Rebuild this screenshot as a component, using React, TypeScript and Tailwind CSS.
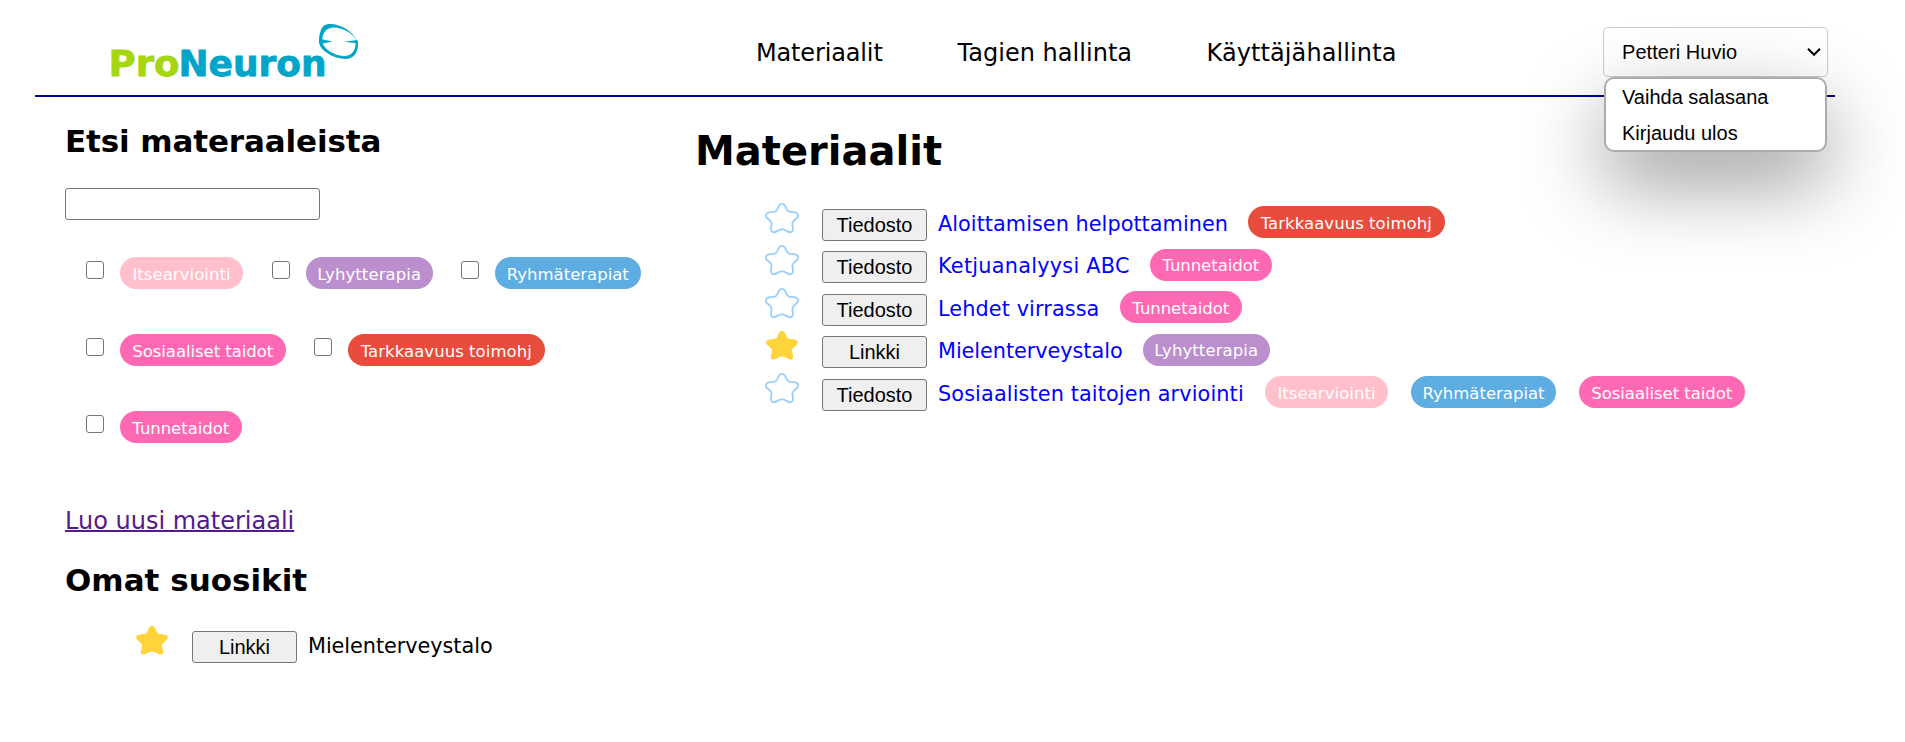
import React from "react";

type Tag = { label: string; color: string; width: string; text: string };

const tags: Record<string, Tag> = {
  itse: { label: "Itsearviointi", color: "bg-[#ffc0cb]", width: "w-[123px]", text: "tracking-[0.05px]" },
  lyhyt: { label: "Lyhytterapia", color: "bg-[#bb8fce]", width: "w-[126.5px]", text: "tracking-[0.1px]" },
  ryhma: { label: "Ryhmäterapiat", color: "bg-[#5dade2]", width: "w-[145.5px]", text: "tracking-[0px]" },
  sos: { label: "Sosiaaliset taidot", color: "bg-[#ff69b4]", width: "w-[165.5px]", text: "tracking-[-0.05px]" },
  tark: { label: "Tarkkaavuus toimohj", color: "bg-[#e74c3c]", width: "w-[196.5px]", text: "tracking-[0.05px]" },
  tunne: { label: "Tunnetaidot", color: "bg-[#ff69b4]", width: "w-[121.5px]", text: "tracking-[-0.05px]" },
};

function TagPill({ tag }: { tag: Tag }) {
  return (
    <span className={`flex h-8 shrink-0 items-center justify-center rounded-full pt-[4px] text-[16.5px] leading-none whitespace-nowrap text-white ${tag.color} ${tag.width}`}>
      <span className={tag.text}>{tag.label}</span>
    </span>
  );
}

const STAR_FILLED =
  "M17 1.8C18.6 1.8 19.7 3 20.6 5L22 8.2C22.4 9.2 23 9.6 24.2 9.8L29 10.4C33.2 11 34 13.7 31.3 16.3L27.9 19.6C27 20.4 26.9 21 27.1 22.1L28 26.7C28.7 30.2 27 31.4 23.8 30L19.2 27.9C17.6 27.2 16.4 27.2 14.8 27.9L10.2 30C7 31.4 5.3 30.2 6 26.7L6.9 22.1C7.1 21 7 20.4 6.1 19.6L2.7 16.3C0 13.7.8 11 5 10.4L9.8 9.8C11 9.6 11.6 9.2 12 8.2L13.4 5C14.3 3 15.4 1.8 17 1.8Z";
const STAR_OUTLINE =
  "M17 1.9C19 1.9 20 3.2 20.8 5.2C21.8 8 22.6 9.9 25.5 9.9C28 9.9 30 10 31.5 10.8C33.6 12 33.6 14.4 32 16C30.4 17.6 27.6 19 27.4 21.5C27.3 23.5 28.2 25.3 28 27.5C27.8 29.8 26 30.6 24 30C21.5 29.3 19.5 27.2 17 27.2C14.5 27.2 12.5 29.3 10 30C8 30.6 6.2 29.8 6 27.5C5.8 25.3 6.7 23.5 6.6 21.5C6.4 19 3.6 17.6 2 16C.4 14.4 .4 12 2.5 10.8C4 10 6 9.9 8.5 9.9C11.4 9.9 12.2 8 13.2 5.2C14 3.2 15 1.9 17 1.9Z";

function Star({ filled }: { filled?: boolean }) {
  return (
    <svg className="h-8 w-[34px] shrink-0" viewBox="0 0 34 32">
      {filled ? (
        <path d={STAR_FILLED} fill="#ffd43b" />
      ) : (
        <path d={STAR_OUTLINE} fill="#ffffff" stroke="#9dd1fb" strokeWidth={1.9} />
      )}
    </svg>
  );
}

function TypeButton({ children, place }: { children: React.ReactNode; place: string }) {
  return (
    <button className={`block h-8 w-[105px] shrink-0 rounded-[3px] border border-[#767676] bg-[#efefef] font-['Liberation_Sans',sans-serif] text-[20px] leading-none text-black ${place}`}>
      {children}
    </button>
  );
}

function Filter({ tag, gap }: { tag: Tag; gap?: string }) {
  return (
    <label className={`flex ${gap ?? ""}`}>
      <span className="mt-1 mr-4 h-[18px] w-[18px] shrink-0 rounded-[3px] border-[1.5px] border-[#767676] bg-white" />
      <TagPill tag={tag} />
    </label>
  );
}

const materials = [
  { type: "Tiedosto", title: "Aloittamisen helpottaminen", w: "w-[310px]", t: "tracking-[0.04px]", tags: [tags.tark] },
  { type: "Tiedosto", title: "Ketjuanalyysi ABC", w: "w-[212px]", t: "tracking-[0.25px]", tags: [tags.tunne] },
  { type: "Tiedosto", title: "Lehdet virrassa", w: "w-[182px]", t: "tracking-[0.1px]", tags: [tags.tunne] },
  { type: "Linkki", title: "Mielenterveystalo", w: "w-[205px]", t: "tracking-[-0.05px]", tags: [tags.lyhyt], fav: true },
  { type: "Tiedosto", title: "Sosiaalisten taitojen arviointi", w: "w-[327px]", t: "tracking-[0.12px]", tags: [tags.itse, tags.ryhma, tags.sos] },
];

function Logo() {
  return (
    <svg className="h-[66px] w-[260px]" viewBox="105 18 260 66" fontFamily="'DejaVu Sans', sans-serif" fontWeight="700">
      <text x="108.5" y="75.5" fontSize="36" fill="#a5d610" stroke="#a5d610" strokeWidth="0.8" textLength="71" lengthAdjust="spacingAndGlyphs">Pro</text>
      <text x="178.5" y="75.5" fontSize="36" fill="#00a5c8" stroke="#00a5c8" strokeWidth="0.8" textLength="148" lengthAdjust="spacingAndGlyphs">Neuron</text>
      <path
        fill="#00a5c8"
        fillRule="evenodd"
        d="M319 41.5C319 37 319.5 33 321 30C322.5 25.5 326 24 330 24C341 24 352 31 358 41.5C358.5 50 356 59 345.5 58.9C334 58.8 320 51 318.9 42ZM322.3 39.3C322.8 33 326 28.2 333 27.6C341 27.2 352 32.5 356.6 40C353 40.8 348 41.2 344.3 41.6C348 42.4 352 42.8 355.5 43C355.5 49 353 55.6 345 56C335 56 324.5 49 322.8 43.4C326 42.8 330 42.3 332.5 41.5C330 40.8 326 40.5 322.3 39.3Z"
      />
    </svg>
  );
}

export default function App() {
  return (
    <div className="flex h-[742px] w-[1905px] flex-col overflow-hidden bg-white font-['DejaVu_Sans',sans-serif] text-black">
      <header className="ml-[35px] flex h-[97px] w-[1800px] shrink-0 border-b-2 border-[#00008b]">
        <div className="w-[721px] shrink-0 pt-[18px] pl-[70px]"><Logo /></div>
        <nav className="flex w-[847px] shrink-0 pt-[38px] text-[24px] leading-[30px] whitespace-nowrap">
          <a className="w-[201.5px]"><span className="tracking-[-0.15px]">Materiaalit</span></a>
          <a className="w-[249px]"><span className="tracking-[0.03px]">Tagien hallinta</span></a>
          <a><span className="tracking-[0.1px]">Käyttäjähallinta</span></a>
        </nav>
        <div className="relative mt-[27px] h-[50px] w-[225px] shrink-0 font-['Liberation_Sans',sans-serif] text-[20px]">
          <div className="absolute top-[50px] left-px z-10 flex h-[75px] w-[223px] flex-col rounded-[10px] border-2 border-[#acacac] bg-white pl-4 shadow-[0_31px_80px_rgba(0,0,0,0.4)]">
            <span className="h-9 leading-9">Vaihda salasana</span>
            <span className="h-9 leading-[37px]">Kirjaudu ulos</span>
          </div>
          <div className="flex h-[50px] items-center justify-between rounded-[5px] border border-[#ccc] pr-[6px] pl-[18px]">
            <span className="tracking-[0.05px]">Petteri Huvio</span>
            <svg className="h-[10px] w-[14px]" viewBox="0 0 14 10"><path d="M1 1.8L7 7.8L13 1.8" fill="none" stroke="#000" strokeWidth="2" /></svg>
          </div>
        </div>
      </header>

      <main className="flex">
        <section className="w-[695px] shrink-0 pl-[65px]">
          <h2 className="mt-[24px] h-10 text-[31px] leading-10 font-bold whitespace-nowrap"><span className="tracking-[-0.12px]">Etsi materaaleista</span></h2>
          <input className="mt-[27px] block h-8 w-[255px] rounded-[3px] border border-[#767676]" />
          <div className="mt-[37px] ml-[21px] flex flex-col gap-[45px]">
            <div className="flex"><Filter tag={tags.itse} /><Filter tag={tags.lyhyt} gap="ml-[29px]" /><Filter tag={tags.ryhma} gap="ml-[28.5px]" /></div>
            <div className="flex"><Filter tag={tags.sos} /><Filter tag={tags.tark} gap="ml-[28.5px]" /></div>
            <div className="flex"><Filter tag={tags.tunne} /></div>
          </div>
          <a className="mt-[63px] block h-[30px] w-fit text-[24px] leading-[30px] whitespace-nowrap text-[#551a8b] underline decoration-2"><span className="tracking-[0px]">Luo uusi materiaali</span></a>
          <h2 className="mt-[24px] h-10 text-[31px] leading-10 font-bold whitespace-nowrap"><span className="tracking-[0px]">Omat suosikit</span></h2>
          <div className="mt-[24px] ml-[70px] flex">
            <Star filled />
            <TypeButton place="mt-[7px] ml-[23px]">Linkki</TypeButton>
            <span className="mt-[7px] ml-[11px] text-[20.8px] leading-[30px] tracking-[-0.05px]">Mielenterveystalo</span>
          </div>
        </section>

        <section className="flex-1">
          <h1 className="mt-[30px] h-[48px] text-[40px] leading-[48px] font-bold whitespace-nowrap"><span className="tracking-[0px]">Materiaalit</span></h1>
          <div className="mt-[26px] ml-[70px]">
            {materials.map((m) => (
              <div key={m.title} className="flex h-[42.5px] pt-[0.9px]">
                <Star filled={m.fav} />
                <TypeButton place="mt-[7px] ml-[23px]">{m.type}</TypeButton>
                <a className={`mt-[7px] ml-[11px] shrink-0 text-[20.8px] leading-[30px] whitespace-nowrap text-[#0000ff] ${m.w}`}><span className={m.t}>{m.title}</span></a>
                <div className="mt-[4.2px] flex gap-[22.75px]">{m.tags.map((t) => <TagPill key={t.label} tag={t} />)}</div>
              </div>
            ))}
          </div>
        </section>
      </main>
    </div>
  );
}
